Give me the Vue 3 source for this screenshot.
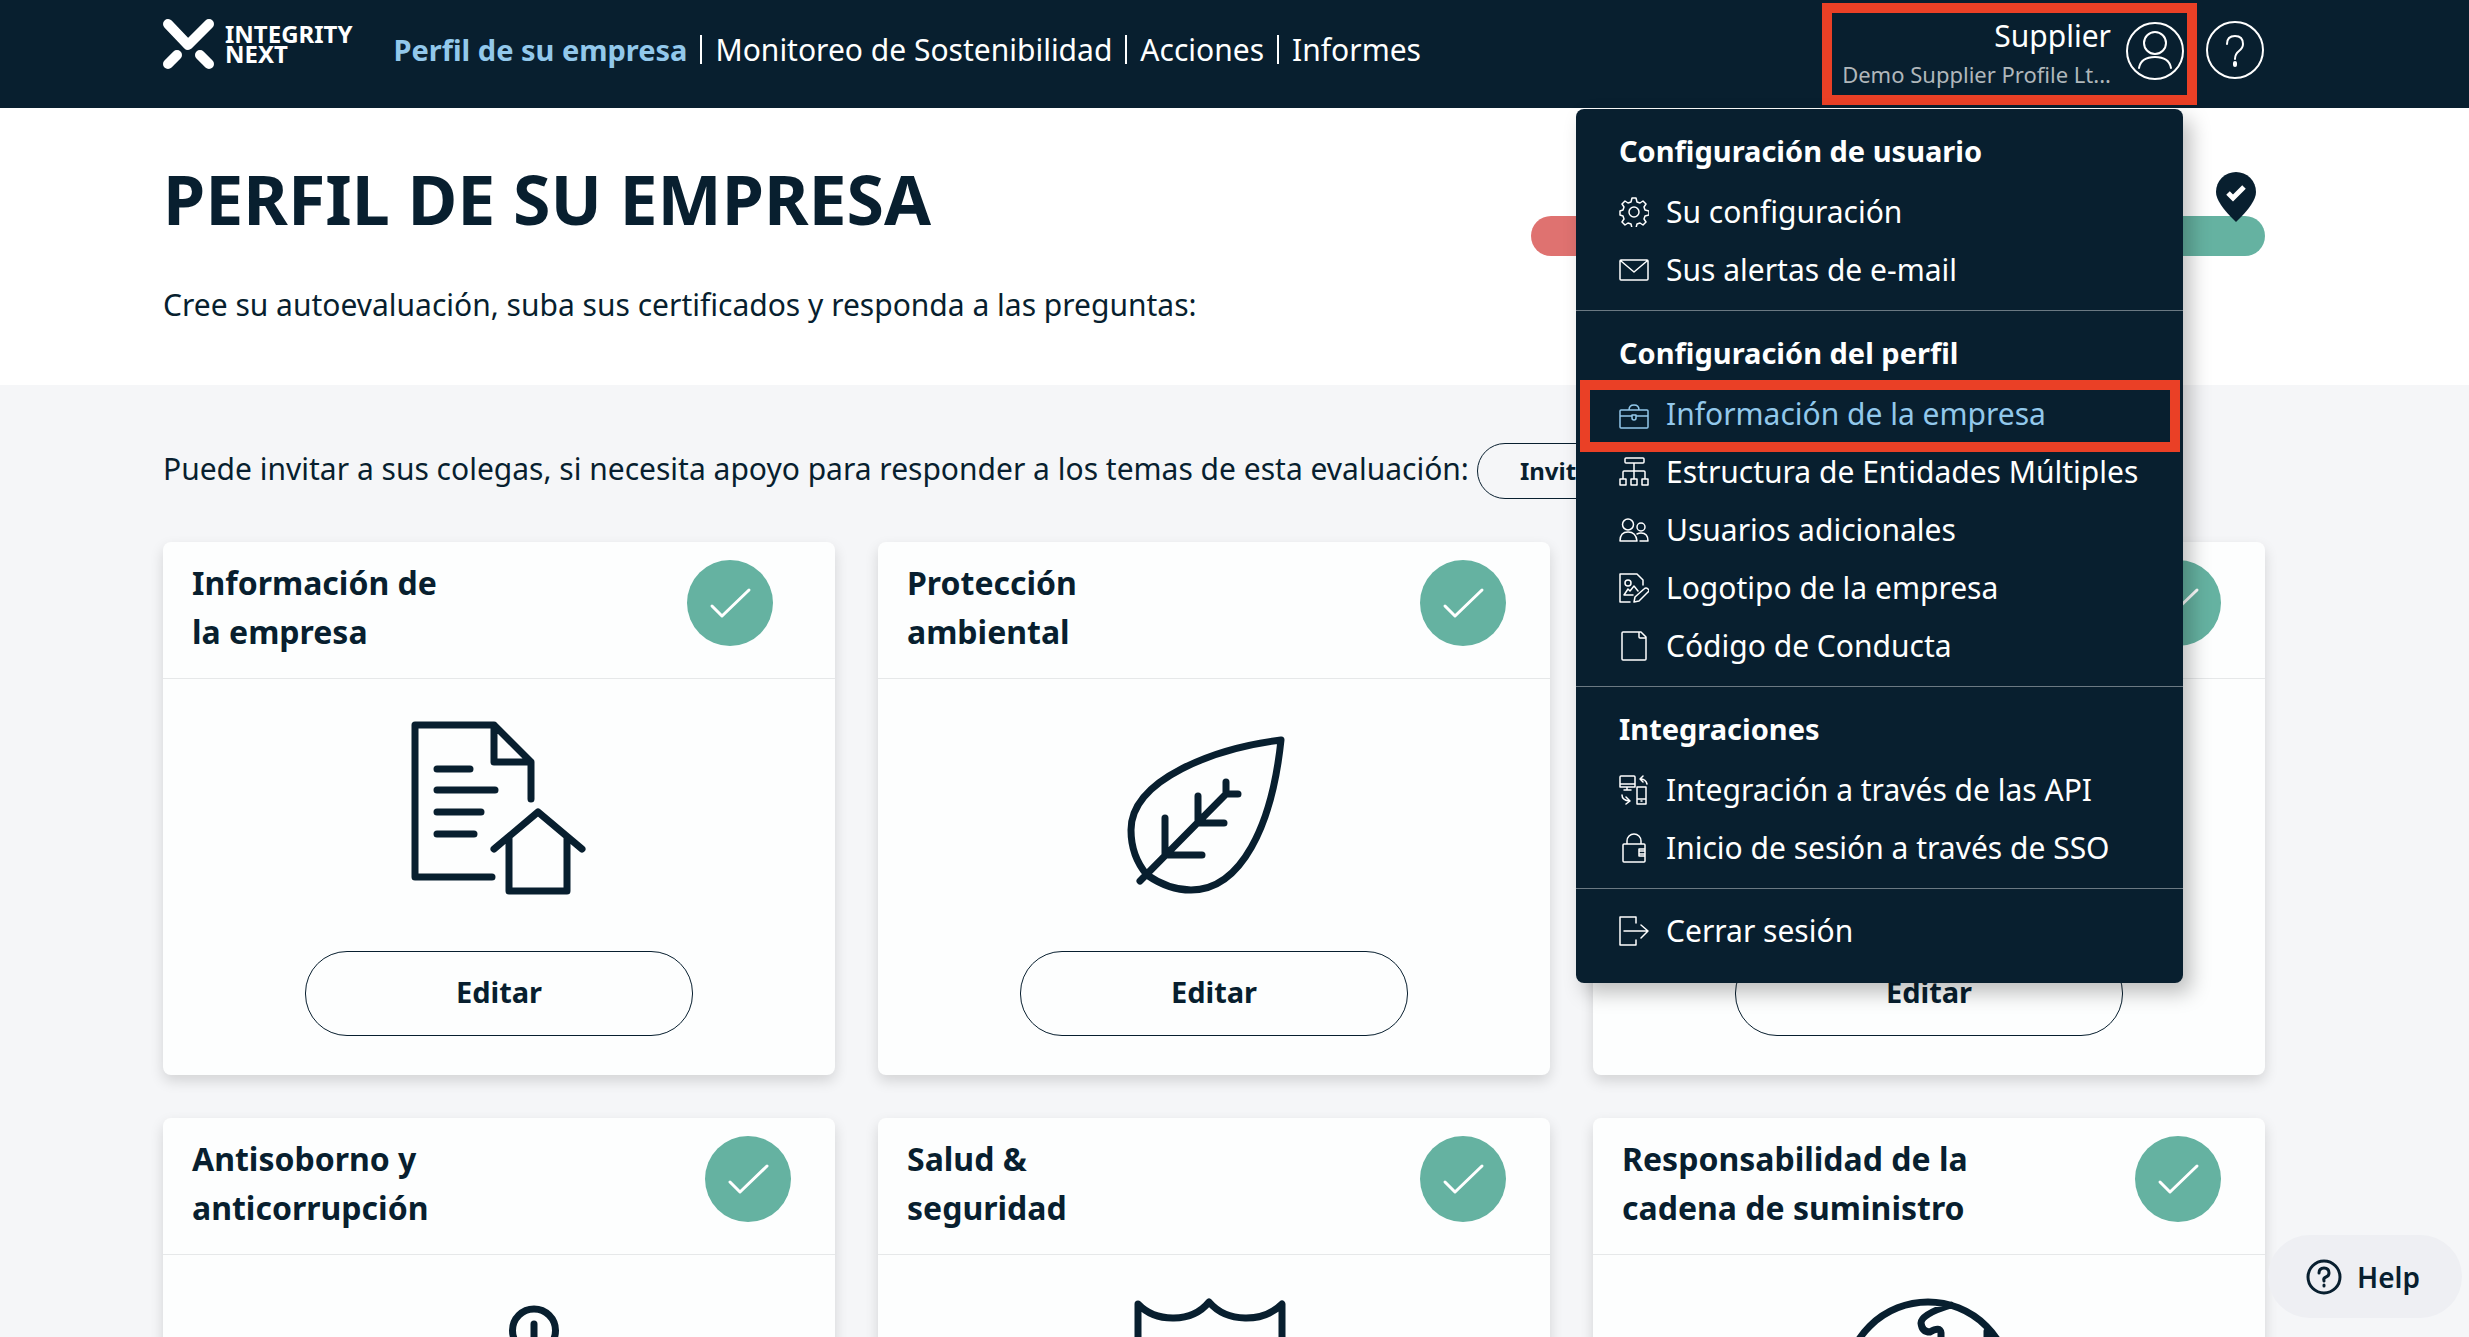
<script setup>
import { ref } from "vue";

const navItems = ref([
  { label: "Perfil de su empresa", active: true },
  { label: "Monitoreo de Sostenibilidad" },
  { label: "Acciones" },
  { label: "Informes" },
]);

const menuSections = ref([
  {
    title: "Configuración de usuario",
    items: [
      {
        label: "Su configuración",
        icon: "M13 1h4l1 4 3 1 3-2 3 3-2 3 1 3 4 1v4l-4 1-1 3 2 3-3 3-3-2-3 1-1 4h-4l-1-4-3-1-3 2-3-3 2-3-1-3-3-1v-4l3-1 1-3-2-3 3-3 3 2 3-1zM15 10a5 5 0 1 0 0 10a5 5 0 1 0 0-10",
      },
      {
        label: "Sus alertas de e-mail",
        icon: "M2 5h26q1 0 1 1v18q0 1-1 1H2q-1 0-1-1V6q0-1 1-1zM2 6l13 11L28 6",
      },
    ],
  },
  {
    title: "Configuración del perfil",
    items: [
      {
        label: "Información de la empresa",
        active: true,
        icon: "M2 11h26q1 0 1 1v16q0 1-1 1H2q-1 0-1-1V12q0-1 1-1zM10 11q0-5 5-5t5 5M1 17h12M17 17h12M13 16h4v3q0 2-2 2t-2-2z",
      },
      {
        label: "Estructura de Entidades Múltiples",
        icon: "M7 1h17q1 0 1 1v3q0 1-1 1H7q-1 0-1-1V2q0-1 1-1zM15 6v15M4 21v-6q0-1 1-1h20q1 0 1 1v6M1 22h6v6H1zM12 22h6v6h-6zM23 22h6v6h-6z",
      },
      {
        label: "Usuarios adicionales",
        icon: "M9 4a5 5 0 1 0 0 11a5 5 0 1 0 0-11M1 26q0-9 8-9t9 9zM22 8a4 4 0 1 0 0 8a4 4 0 1 0 0-8M18 19q2-1 4-1q7 0 7 8h-8",
      },
      {
        label: "Logotipo de la empresa",
        icon: "M11 29H1V1h17l6 6v5M9 7a3 3 0 1 0 0 6a3 3 0 1 0 0-6M5 22l4-6 2 2 4-5 4 5M5 22h9M15 29l1-5 9-8q2-2 4 0t0 3l-9 9z",
      },
      {
        label: "Código de Conducta",
        icon: "M5 1h17l5 5v22q0 1-1 1H4q-1 0-1-1V2q0-1 1-1zM20 1v5q0 1 1 1h6",
      },
    ],
  },
  {
    title: "Integraciones",
    items: [
      {
        label: "Integración a través de las API",
        icon: "M2 1h13q1 0 1 1v10H1V2q0-1 1-1zM1 9h15M8 12v3M5 15h7M18 12h9v17h-9zM18 24h9M22 26h1M28 9q-1-5-7-5M24 1l-3 3 3 3M3 20q0 5 7 6M7 22l4 4-4 3",
      },
      {
        label: "Inicio de sesión a través de SSO",
        icon: "M5 11h20q1 0 1 1v16q0 1-1 1H5q-1 0-1-1V12q0-1 1-1zM8 11V8a7 7 0 0 1 14 0v3M26 16h-6v7h6M20 18h6M20 21h6",
      },
    ],
  },
  {
    items: [
      {
        label: "Cerrar sesión",
        icon: "M17 7V1H1v28h16v-5M5 15h24M22 9l7 6-7 7",
      },
    ],
  },
]);

const cards = ref([
  {
    title: ["Información de", "la empresa"],
    compact: true,
    icon: "M81 156H4V4h79l37 37v37M83 4v37h37M26 48h33M26 69h58M26 91h44M26 113h37M83 128l44-37 44 37M98 117v53h58v-53",
  },
  {
    title: ["Protección", "ambiental"],
    icon: "M155 19C90 27 5 58 5 109C5 126 10 141 21 154C34 163 49 169 65 169C115 169 146 105 155 19zM14 160L100 73M39 97v37h37M72 75v27h26M100 61v12h12",
  },
  {
    title: ["Derechos humanos", "y trabajo"],
    icon: "M88 10a28 28 0 1 0 0 56a28 28 0 1 0 0-56M30 166q0-76 58-76t58 76z",
  },
  {
    title: ["Antisoborno y", "anticorrupción"],
    icon: "M123 12a21 21 0 1 0 0 43a21 21 0 1 0 0-43M123 27v13M123 55v30M40 170h100M20 90h80",
  },
  {
    title: ["Salud &", "seguridad"],
    icon: "M12 120V7C30 26 66 26 83 5C101 26 137 26 156 7V120Q130 160 84 172Q38 160 12 120",
  },
  {
    title: ["Responsabilidad de la", "cadena de suministro"],
    icon: "M87 5a82 82 0 1 0 0 165a82 82 0 1 0 0-165M110 8Q80 17 80 26Q81 35 89 35Q99 29 100 36V48M152 40L146 34V56",
  },
]);
</script>

<template>
  <div class="page">
    <header class="header">
      <a href="#" class="logo">
        <svg class="logo-mark" viewBox="0 0 51 50" aria-hidden="true">
          <path d="M5 5L25 26L46 5" stroke-width="10" />
          <path d="M14 36L5 45M37 36L46 45" stroke-width="10" />
        </svg>
        <span class="logo-text">INTEGRITY<br />NEXT</span>
      </a>
      <nav class="nav">
        <a
          v-for="item in navItems"
          :key="item.label"
          href="#"
          class="nav-link"
          :class="{ active: item.active }"
          >{{ item.label }}</a
        >
      </nav>
      <button class="user">
        <span class="user-info">
          <span class="user-name">Supplier</span>
          <span class="user-company">Demo Supplier Profile Lt...</span>
        </span>
        <svg class="round-icon" viewBox="0 0 58 58" aria-hidden="true">
          <circle cx="29" cy="29" r="28" />
          <circle cx="29" cy="21" r="11" />
          <path d="M13 46Q15 35 29 35T45 46" />
        </svg>
      </button>
      <button class="help-link" aria-label="Ayuda">
        <svg class="round-icon" viewBox="0 0 58 58" aria-hidden="true">
          <circle cx="29" cy="29" r="28" />
          <path d="M21 23Q21 15 29 15T37 23Q37 27 33 30T29 38" />
          <path d="M29 42v2" stroke-width="4" />
        </svg>
      </button>

      <div class="menu">
        <section v-for="(s, i) in menuSections" :key="i" class="menu-section">
          <h2 v-if="s.title">{{ s.title }}</h2>
          <a
            v-for="item in s.items"
            :key="item.label"
            href="#"
            class="menu-item"
            :class="{ active: item.active }"
          >
            <svg viewBox="0 0 30 30" aria-hidden="true">
              <path :d="item.icon" />
            </svg>
            {{ item.label }}
          </a>
        </section>
      </div>
    </header>

    <section class="hero">
      <div>
        <h1>PERFIL DE SU EMPRESA</h1>
        <p>
          Cree su autoevaluación, suba sus certificados y responda a las
          preguntas:
        </p>
      </div>
      <div class="progress">
        <svg class="pin" viewBox="0 0 40 50" aria-hidden="true">
          <path d="M20 0a20 20 0 0 1 20 20Q40 31 20 50Q0 31 0 20A20 20 0 0 1 20 0z" />
          <path class="pin-check" d="M12 21l5 5 11-11" />
        </svg>
      </div>
    </section>

    <main class="content">
      <div class="invite">
        <p>
          Puede invitar a sus colegas, si necesita apoyo para responder a los
          temas de esta evaluación:
        </p>
        <button class="invite-btn">Invitar</button>
      </div>
      <div class="cards">
        <article v-for="(c, i) in cards" :key="i" class="card">
          <div class="card-head" :class="{ compact: c.compact }">
            <h3>{{ c.title[0] }}<br />{{ c.title[1] }}</h3>
            <svg class="check" viewBox="0 0 86 86" aria-hidden="true">
              <circle cx="43" cy="43" r="43" />
              <path d="M25 46l10 10 27-26" />
            </svg>
          </div>
          <div class="card-body">
            <svg viewBox="0 0 176 176" aria-hidden="true">
              <path :d="c.icon" />
            </svg>
            <button class="edit-btn">Editar</button>
          </div>
        </article>
      </div>
    </main>

    <button class="help">
      <svg viewBox="0 0 36 36" aria-hidden="true">
        <circle cx="18" cy="18" r="16" />
        <path d="M13 14Q13 9 18 9T23 14Q23 17 20 18T18 22" />
        <path d="M18 26v1" />
      </svg>
      Help
    </button>
  </div>
</template>

<style>
body {
  margin: 0;
}
</style>

<style scoped>
.page {
  height: 100vh;
  overflow: hidden;
  background: #f5f6f8;
  color: #081f2f;
  font-family: "Noto Sans", "Open Sans", sans-serif;
  font-size: 30px;
}

h1,
h2,
h3,
p {
  margin: 0;
}

a {
  color: inherit;
  text-decoration: none;
}

button {
  font: inherit;
  color: inherit;
  background: none;
  border: none;
  padding: 0;
  cursor: pointer;
}

svg {
  display: block;
  flex: none;
  fill: none;
  stroke: currentColor;
  stroke-linecap: round;
  stroke-linejoin: round;
}

.header {
  position: relative;
  z-index: 2;
  display: flex;
  align-items: center;
  height: 100px;
  padding: 0 205px 8px 163px;
  background: #081f2f;
  color: #fff;
}

.logo {
  display: flex;
  align-items: center;
  gap: 11px;
  margin-bottom: 12px;
}

.logo-mark {
  width: 51px;
  height: 50px;
}

.logo-text {
  font-size: 24px;
  font-weight: 700;
  line-height: 20px;
}

.nav {
  display: flex;
  margin-left: 28px;
  margin-bottom: 2px;
}

.nav-link {
  line-height: 29px;
  padding: 0 13px;
  white-space: nowrap;
}

.nav-link + .nav-link {
  border-left: 2px solid #fff;
}

.nav-link.active {
  color: #92c8eb;
  font-size: 29px;
  font-weight: 700;
}

.user {
  display: flex;
  align-items: center;
  align-self: stretch;
  gap: 15px;
  margin: 3px 9px -5px auto;
  padding: 0 3px 7px 10px;
  border: 10px solid #ea4026;
}

.user-info {
  display: flex;
  flex-direction: column;
  align-items: flex-end;
  padding-top: 8px;
  line-height: 39px;
}

.user-company {
  font-size: 22px;
  color: #b0b7bb;
}

.round-icon {
  width: 58px;
  height: 58px;
  stroke-width: 2;
}

.menu {
  position: absolute;
  top: 109px;
  right: 286px;
  width: 607px;
  padding-bottom: 12px;
  border-radius: 8px;
  background: #081f2f;
  box-shadow: 8px 10px 20px rgba(0, 0, 0, 0.25);
}

.menu-section {
  padding: 13px 0 11px;
}

.menu-section + .menu-section {
  border-top: 1px solid #6b7983;
}

.menu-section h2 {
  margin-bottom: 4px;
  padding: 0 43px;
  font-size: 29px;
  font-weight: 700;
  line-height: 57px;
}

.menu-item {
  position: relative;
  display: flex;
  align-items: center;
  gap: 17px;
  padding: 0 43px;
  line-height: 58px;
  white-space: nowrap;
}

.menu-item svg {
  width: 30px;
  height: 30px;
  stroke-width: 1.5;
}

.menu-item.active {
  color: #92c8eb;
}

.menu-item.active::before {
  content: "";
  position: absolute;
  inset: -5px 3px -9px 4px;
  border: 10px solid #ea4026;
}

.hero {
  display: flex;
  justify-content: space-between;
  padding: 51px 204px 60px 163px;
  background: #fff;
}

.hero h1 {
  font-size: 68px;
  font-weight: 700;
  line-height: 80px;
}

.hero p {
  margin-top: 46px;
  line-height: 40px;
}

.progress {
  position: relative;
  width: 734px;
  height: 40px;
  margin-top: 57px;
  border-radius: 20px;
  background: linear-gradient(90deg, #df7270 33%, #f2c166 33% 66%, #65b2a1 66%);
}

.pin {
  position: absolute;
  right: 9px;
  bottom: 34px;
  width: 40px;
  height: 50px;
  fill: #081f2f;
  stroke: none;
}

.pin-check {
  fill: none;
  stroke: #fff;
  stroke-width: 5;
  stroke-linecap: butt;
  stroke-linejoin: miter;
}

.content {
  padding: 58px 204px 43px 163px;
}

.invite {
  display: flex;
  gap: 8px;
  line-height: 52px;
  white-space: nowrap;
}

.invite-btn {
  height: 56px;
  padding: 0 42px;
  border: 1px solid #081f2f;
  border-radius: 28px;
  font-size: 24px;
  font-weight: 700;
}

.cards {
  display: grid;
  grid-template-columns: repeat(3, 1fr);
  gap: 43px;
  margin-top: 43px;
}

.card {
  border-radius: 8px;
  background: #fdfefe;
  box-shadow: 0 6px 14px rgba(0, 0, 0, 0.14);
}

.card-head {
  display: flex;
  justify-content: space-between;
  align-items: flex-start;
  height: 120px;
  padding: 16px 44px 0 29px;
  border-bottom: 1px solid #e6e8e9;
}

.card-head.compact {
  padding-right: 62px;
}

.card-head h3 {
  font-size: 32px;
  font-weight: 700;
  line-height: 49px;
}

.check {
  width: 86px;
  height: 86px;
  margin-top: 2px;
}

.check circle {
  fill: #65b2a1;
  stroke: none;
}

.check path {
  stroke: #fff;
  stroke-width: 3;
}

.card-body {
  display: flex;
  flex-direction: column;
  align-items: center;
  gap: 54px;
  padding: 42px 0 39px;
}

.card-body svg {
  width: 176px;
  height: 176px;
  stroke-width: 7;
}

.edit-btn {
  width: 388px;
  height: 85px;
  padding-bottom: 4px;
  border: 1px solid #081f2f;
  border-radius: 42px;
  font-size: 29px;
  font-weight: 700;
}

.help {
  position: fixed;
  right: 7px;
  bottom: 19px;
  display: flex;
  align-items: center;
  gap: 15px;
  height: 83px;
  padding: 0 42px 0 38px;
  border-radius: 42px;
  background: #eeeff3;
  font-size: 28px;
  font-weight: 600;
}

.help svg {
  width: 36px;
  height: 36px;
  stroke-width: 3;
}
</style>
